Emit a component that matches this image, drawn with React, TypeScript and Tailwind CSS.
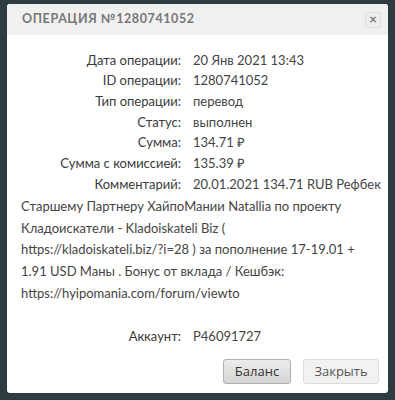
const rows: [string, string][] = [
  ["Дата операции:", "20 Янв 2021 13:43"],
  ["ID операции:", "1280741052"],
  ["Тип операции:", "перевод"],
  ["Статус:", "выполнен"],
  ["Сумма:", "134.71 ₽"],
  ["Сумма с комиссией:", "135.39 ₽"],
  ["Комментарий:", "20.01.2021 134.71 RUB Рефбек"],
];

const comment = [
  "Старшему Партнеру ХайпоМании Natallia по проекту",
  "Кладоискатели - Kladoiskateli Biz (",
  "https://kladoiskateli.biz/?i=28 ) за пополнение 17-19.01 +",
  "1.91 USD Маны . Бонус от вклада / Кешбэк:",
  "https://hyipomania.com/forum/viewto",
];

export default function App() {
  return (
    <div className="h-[400px] w-[395px] bg-[#2e3b41] pl-[7px] pr-[7px] pt-[4px] font-['Lato','Open_Sans',sans-serif]">
      <div className="h-[389px] overflow-hidden rounded-[3px] bg-white">
        <div className="flex h-[31px] items-center justify-between bg-[#f0f0f0] pl-[15px] pr-[7px]">
          <span className="text-[12.5px] font-bold tracking-[0.6px] text-[#777]">ОПЕРАЦИЯ №1280741052</span>
          <button className="flex h-[16px] w-[16px] items-center justify-center rounded-[2px] border border-[#ddd] bg-[#eee] text-[13px] font-bold leading-none text-[#777]">
            ×
          </button>
        </div>

        <div className="pt-[15px] text-[13px] text-[#3a3a3a]">
          {rows.map(([label, value]) => (
            <div key={label} className="flex h-[20.7px] items-center">
              <div className="w-[174px] text-right">{label}</div>
              <div className="pl-[12px] text-[#444]">{value}</div>
            </div>
          ))}
          <div className="pl-[14px] pt-[1px] leading-[21.8px] text-[#444]">
            {comment.map((line) => (
              <div key={line}>{line}</div>
            ))}
          </div>
          <div className="mt-[22px] flex h-[20px] items-center">
            <div className="w-[174px] text-right">Аккаунт:</div>
            <div className="pl-[12px] text-[#444]">P46091727</div>
          </div>

          <div className="mt-[12px] flex justify-end gap-[12px] pr-[9px] font-['Open_Sans',sans-serif] text-[13px]">
            <button className="h-[25px] w-[68px] rounded-[3px] border border-[#b0b0b0] bg-gradient-to-b from-[#ececec] to-[#d4d4d4] text-[#333]">
              Баланс
            </button>
            <button className="h-[25px] w-[76px] rounded-[3px] border border-[#dcdcdc] bg-[#f2f2f2] text-[#555]">
              Закрыть
            </button>
          </div>
        </div>
      </div>
    </div>
  );
}
